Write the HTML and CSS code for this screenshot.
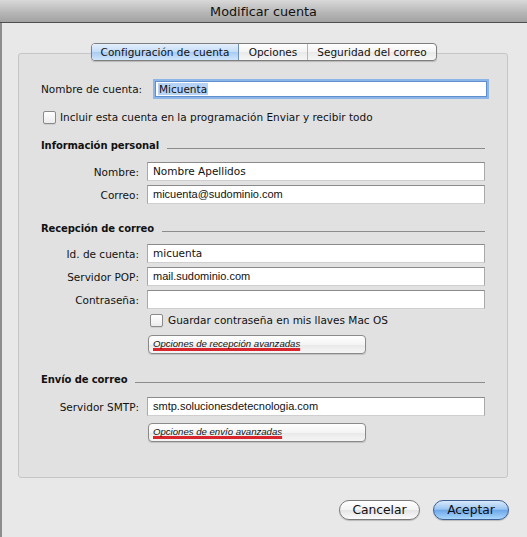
FILE: index.html
```html
<!DOCTYPE html>
<html lang="es">
<head>
<meta charset="utf-8">
<title>Modificar cuenta</title>
<link rel="stylesheet" href="styles.css">
</head>
<body>
<div class="window">
  <div class="titlebar">Modificar cuenta</div>
  <div class="content">
    <div class="tabs">
      <div class="tab tab-sel">Configuración de cuenta</div>
      <div class="tab tab-opt">Opciones</div>
      <div class="tab tab-sec">Seguridad del correo</div>
    </div>
    <div class="panel">
      <div class="row-account">
        <span class="acc-label">Nombre de cuenta:</span>
        <div class="input input-focus"><span class="sel">Micuenta</span></div>
      </div>
      <div class="check-row check-top">
        <span class="checkbox"></span>
        <span>Incluir esta cuenta en la programación Enviar y recibir todo</span>
      </div>
      <div class="section-head sh-1"><span>Información personal</span><span class="rule"></span></div>
      <div class="field f-first1"><span class="lbl">Nombre:</span><div class="input">Nombre Apellidos</div></div>
      <div class="field"><span class="lbl">Correo:</span><div class="input mono">micuenta@sudominio.com</div></div>
      <div class="section-head sh-2"><span>Recepción de correo</span><span class="rule"></span></div>
      <div class="field f-first2"><span class="lbl">Id. de cuenta:</span><div class="input">micuenta</div></div>
      <div class="field"><span class="lbl">Servidor POP:</span><div class="input mono">mail.sudominio.com</div></div>
      <div class="field"><span class="lbl">Contraseña:</span><div class="input"></div></div>
      <div class="check-row check-pw">
        <span class="checkbox"></span>
        <span>Guardar contraseña en mis llaves Mac OS</span>
      </div>
      <div class="opt-row opt-1"><div class="opt-btn"><span class="mark">Opciones de recepción avanzadas</span></div></div>
      <div class="section-head sh-3"><span>Envío de correo</span><span class="rule"></span></div>
      <div class="field f-first3"><span class="lbl">Servidor SMTP:</span><div class="input mono">smtp.solucionesdetecnologia.com</div></div>
      <div class="opt-row opt-2"><div class="opt-btn"><span class="mark">Opciones de envío avanzadas</span></div></div>
    </div>
    <div class="actions">
      <div class="btn btn-cancel">Cancelar</div>
      <div class="btn btn-ok">Aceptar</div>
    </div>
  </div>
</div>
</body>
</html>
```
FILE: styles.css
```css
html, body {
  margin: 0;
  padding: 0;
  background: #e8e8e8;
}
body {
  font-family: "DejaVu Sans", "Liberation Sans", sans-serif;
  font-size: 10.5px;
  color: #111;
}
.window {
  width: 527px;
  height: 537px;
  overflow: hidden;
  background: #e8e8e8;
}
.titlebar {
  height: 22px;
  line-height: 23px;
  text-align: center;
  font-size: 12.8px;
  color: #111;
  background: linear-gradient(#d9d9d9, #b5b5b5 60%, #a2a2a2);
  border-bottom: 1px solid #4e4e4e;
}
.content {
  border-left: 2px solid #8d8d8d;
  height: 514px;
  box-sizing: border-box;
  display: flex;
  flex-direction: column;
}
.tabs {
  position: relative;
  z-index: 1;
  display: flex;
  align-self: flex-start;
  margin-top: 20px;
  margin-left: 89px;
  height: 18px;
  box-sizing: border-box;
  border: 1px solid #7e7e7e;
  border-radius: 4px;
  overflow: hidden;
  background: linear-gradient(#ffffff, #f3f3f3 50%, #e9e9e9 51%, #f6f6f6);
  box-shadow: 0 1px 1px rgba(0,0,0,0.18);
}
.tab {
  height: 16px;
  line-height: 16px;
  text-align: center;
  box-sizing: border-box;
  font-size: 10.5px;
}
.tab-sel {
  width: 147px;
  background: linear-gradient(#e4f0fc, #c3dcf7 50%, #a9cbf2 51%, #cfe5fb);
  border-right: 1px solid #6f8fb8;
}
.tab-opt {
  width: 69px;
  border-right: 1px solid #b5b5b5;
}
.tab-sec {
  width: 128px;
}
.panel {
  margin: -8px 19px 0 16px;
  border: 1px solid #c6c6c6;
  border-radius: 3px;
  background: #e1e1e1;
  padding: 27px 22px 35px 22px;
  display: flex;
  flex-direction: column;
}
.row-account {
  display: flex;
  align-items: center;
  height: 16px;
}
.acc-label {
  width: 114px;
}
.input {
  flex: 1;
  height: 19px;
  box-sizing: border-box;
  background: #fff;
  border: 1px solid #a9a9a9;
  border-top-color: #8a8a8a;
  border-bottom-color: #cfcfcf;
  padding-left: 5px;
  line-height: 17px;
  white-space: nowrap;
  font-size: 10.5px;
}
.input.mono {
  font-family: "Liberation Sans", Arial, sans-serif;
  font-size: 11px;
}
.input-focus {
  height: 16px;
  line-height: 14px;
  margin-right: -2px;
  padding-left: 2px;
  border: 1px solid #5f8fcf;
  box-shadow: 0 0 0 2px #8db6e8;
}
.sel {
  background: #b6d3f5;
  padding: 0 1px;
}
.check-row {
  display: flex;
  align-items: center;
  height: 14px;
  gap: 4px;
}
.check-top {
  margin-top: 13px;
  margin-left: 2px;
}
.check-pw {
  margin-top: 4px;
  margin-left: 109px;
  gap: 5px;
}
.checkbox {
  width: 13px;
  height: 13px;
  box-sizing: border-box;
  border: 1px solid #8a8a8a;
  border-radius: 2px;
  background: linear-gradient(#ffffff, #ececec);
  box-shadow: 0 1px 0 rgba(0,0,0,0.08);
}
.section-head {
  display: flex;
  align-items: center;
  height: 13px;
  gap: 8px;
  font-weight: bold;
  font-size: 10px;
  letter-spacing: -0.1px;
}
.rule {
  flex: 1;
  height: 0;
  border-top: 1px solid #8c8c8c;
  margin-top: 5px;
}
.sh-1 { margin-top: 15px; }
.sh-2 { margin-top: 18px; }
.sh-3 { margin-top: 19px; }
.field {
  display: flex;
  align-items: center;
  margin-top: 4px;
}
.field .lbl {
  width: 98px;
  text-align: right;
  margin-right: 8px;
}
.f-first1 { margin-top: 10px; }
.f-first2 { margin-top: 9px; }
.f-first3 { margin-top: 11px; }
.opt-row {
  display: flex;
  padding-left: 107px;
}
.opt-1 { margin-top: 8px; }
.opt-2 { margin-top: 7px; }
.opt-btn {
  width: 218px;
  height: 19px;
  box-sizing: border-box;
  border: 1px solid #8a8a8a;
  border-radius: 4px;
  background: linear-gradient(#ffffff, #f4f4f4 50%, #e9e9e9 51%, #f5f5f5);
  box-shadow: 0 1px 1px rgba(0,0,0,0.15);
  font-family: "Liberation Sans", Arial, sans-serif;
  font-style: italic;
  font-size: 9.6px;
  line-height: 16px;
  padding-left: 4px;
  white-space: nowrap;
}
.mark {
  text-decoration-line: underline;
  text-decoration-color: #d9262c;
  text-decoration-thickness: 3px;
  text-underline-offset: 1px;
  text-decoration-skip-ink: none;
}
.actions {
  display: flex;
  justify-content: flex-end;
  gap: 13px;
  margin-top: 22px;
  margin-right: 18px;
}
.btn {
  height: 20px;
  box-sizing: border-box;
  border-radius: 10px;
  text-align: center;
  line-height: 18px;
  font-size: 12.3px;
  box-shadow: 0 1px 1px rgba(0,0,0,0.2);
}
.btn-cancel {
  width: 81px;
  border: 1px solid #7a7a7a;
  background: linear-gradient(#ffffff, #f3f3f3 50%, #e4e4e4 51%, #fbfbfb);
}
.btn-ok {
  width: 76px;
  border: 1px solid #3d5f93;
  background: linear-gradient(#d8e9fb, #9cc6f2 45%, #6ea8ea 52%, #a9d6fb);
}
```
